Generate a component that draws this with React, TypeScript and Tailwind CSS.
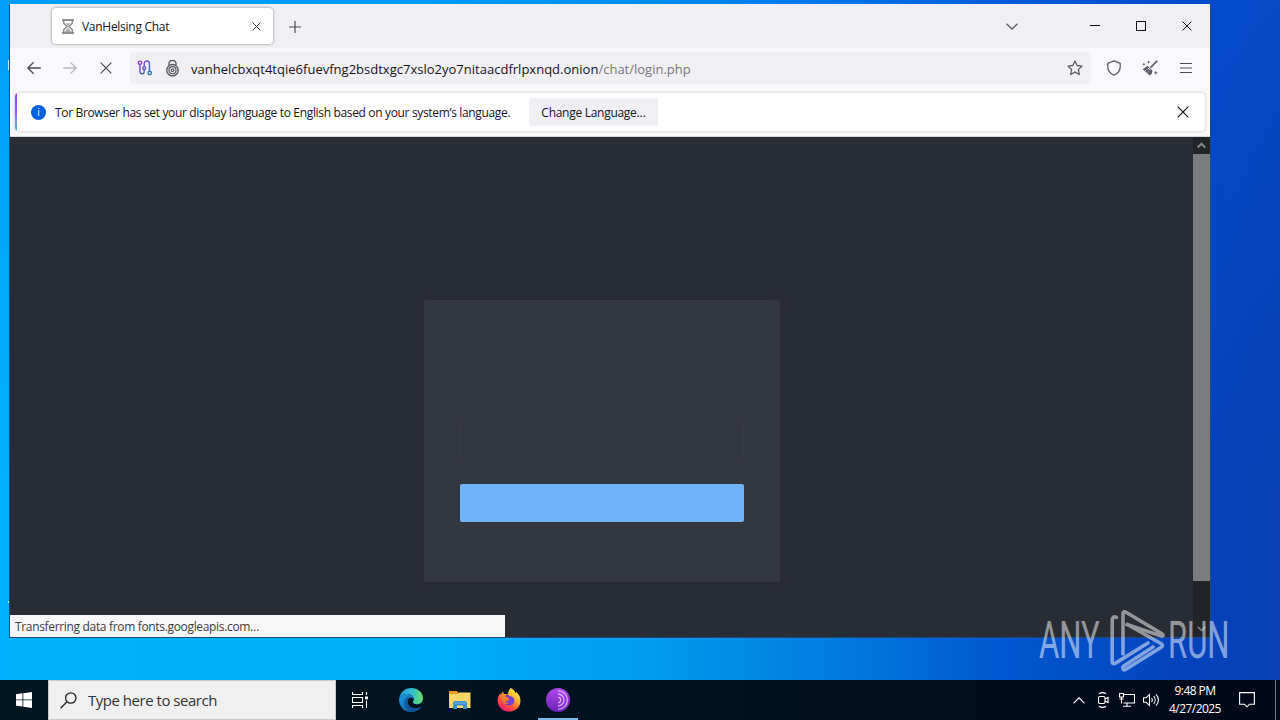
import React from "react";

type IconProps = { className?: string };

const Cross = ({ className = "" }: IconProps) => (
  <svg className={className} viewBox="0 0 12 12" fill="none" stroke="currentColor" strokeWidth="1.2">
    <path d="M.7.7 11.3 11.3M11.3.7.7 11.3" />
  </svg>
);

const Arrow = ({ className = "" }: IconProps) => (
  <svg className={className} viewBox="0 0 14 12" fill="none" stroke="currentColor" strokeWidth="1.3" strokeLinecap="round" strokeLinejoin="round">
    <path d="M13.3 6H.9M6.2.8.8 6l5.4 5.2" />
  </svg>
);

const Hourglass = () => (
  <svg className="h-[15px] w-3 text-[#8f8f8f]" viewBox="0 0 12 15" fill="none" stroke="currentColor">
    <path d="M0 1h12M0 14h12" strokeWidth="2" />
    <path d="M1.7 2v2.2L5 7.5l-3.3 3.3V13M10.3 2v2.2L7 7.5l3.3 3.3V13" strokeWidth="1.6" />
    <path d="m6 8.500 3.300 4.500H2.700zM3.500 4.200h5L6 7z" fill="currentColor" stroke="none" opacity=".75" />
  </svg>
);

const Circuit = () => (
  <svg className="h-4 w-4" viewBox="0 0 16 16" fill="none" stroke="url(#circuit)" strokeWidth="1.4">
    <defs>
      <linearGradient id="circuit" x1="0" y1="0" x2="16" y2="12" gradientUnits="userSpaceOnUse">
        <stop stopColor="#b52fce" />
        <stop offset=".5" stopColor="#6450c8" />
        <stop offset="1" stopColor="#1681bd" />
      </linearGradient>
    </defs>
    <circle cx="3" cy="2.800" r="1.700" />
    <path d="M3 4.500v7.200a2.100 2.100 0 0 0 4.200 0V9.800" />
    <circle cx="7.200" cy="8.100" r="1.500" />
    <path d="M7.200 6.500V3.600a2.600 2.600 0 0 1 5.200 0v7.700" />
    <circle cx="12.700" cy="13" r="1.700" />
  </svg>
);

const OnionLock = () => (
  <svg className="h-[17px] w-[13px] text-[#55555e]" viewBox="0 0 13 17" fill="none" stroke="currentColor">
    <path d="M3 5V3.800a3.500 3.500 0 0 1 7 0V5" strokeWidth="1.400" />
    <circle cx="6.500" cy="10.200" r="5.700" strokeWidth="1.300" />
    <circle cx="6.500" cy="10.200" r="3.500" strokeWidth="1.200" />
    <circle cx="6.500" cy="10.200" r="1.300" strokeWidth="1.200" />
  </svg>
);

const Star = () => (
  <svg className="h-4 w-4 text-[#5b5b66]" viewBox="0 0 16 16" fill="none" stroke="currentColor" strokeWidth="1.3" strokeLinejoin="round">
    <path d="m8 1 2.1 4.5 4.9.6-3.6 3.4.9 5L8 12.1l-4.3 2.4.9-5L1 6.1l4.9-.6z" />
  </svg>
);

const Shield = () => (
  <svg className="h-4 w-[14px] text-[#5b5b66]" viewBox="0 0 14 16" fill="none" stroke="currentColor" strokeWidth="1.3" strokeLinejoin="round">
    <path d="M7 .8 13.2 3.3v3.4c0 3.6-2.4 6.900-6.2 8.500C3.200 13.600.8 10.300.8 6.700V3.300z" />
  </svg>
);

const Broom = () => (
  <svg className="h-4 w-4 text-[#5b5b66]" viewBox="0 0 16 16" fill="none" stroke="currentColor" strokeWidth="1.5">
    <path d="M15.400.6 8.500 7.600" />
    <path d="m5.700 5.900 4.500 4.300c.4 2.200-.5 4-2.500 5.400L.5 9c1.300-.3 2.200-.8 2.700-1.600.6-.9 1.300-1.400 2.500-1.500z" fill="currentColor" stroke="none" />
    <path d="m5.800 7.900 2.400 2.400" stroke="#f9f9fb" strokeWidth="1" />
    <path d="m3.200 10.700 1.500-1M5.300 12.600l1-1.300" stroke="#f9f9fb" strokeWidth=".6" />
    <path d="m6.700.3.5 1.200 1.200.5-1.200.5-.5 1.200-.5-1.200L5 2l1.200-.5zM1.900 2.500l.5 1.200 1.200.5-1.200.5-.5 1.200-.5-1.200-1.200-.5 1.200-.5zM13.800 10.700l.6 1.500 1.500.6-1.500.6-.6 1.500-.6-1.500-1.500-.6 1.500-.6z" fill="currentColor" stroke="none" />
  </svg>
);

const Menu = () => (
  <svg className="h-3 w-3 text-[#4b4b55]" viewBox="0 0 12 12" stroke="currentColor" strokeWidth="1.200">
    <path d="M0 1.500h12M0 6h12M0 10.500h12" />
  </svg>
);

const Edge = () => (
  <svg className="h-6 w-6" viewBox="0 0 24 24">
    <defs>
      <linearGradient id="edgeTop" x1="2" y1="8" x2="24" y2="9" gradientUnits="userSpaceOnUse">
        <stop stopColor="#259fdf" />
        <stop offset=".5" stopColor="#32c1cd" />
        <stop offset="1" stopColor="#67df63" />
      </linearGradient>
      <linearGradient id="edgeLow" x1="3" y1="10" x2="18" y2="24" gradientUnits="userSpaceOnUse">
        <stop stopColor="#1b8fda" />
        <stop offset="1" stopColor="#0f54a0" />
      </linearGradient>
    </defs>
    <path d="M.2 10.700C1 4.500 6 0 12 0c7 0 12 4.700 12 10.200 0 3.700-2.700 6-6 6-2.800 0-4.200-1-4.200-1.900 0-.8 1-1.100 1-2.900C14.800 8.300 11.800 6 8.200 6 4.200 6 1.300 8 .2 10.700z" fill="url(#edgeTop)" />
    <path d="M.2 10.700C1.500 7.300 4.600 6 8.200 6c3.600 0 6.600 2.300 6.600 5.400-.6-1.200-1.700-1.700-2.800-1.700-2 0-3.500 1.600-3.500 4 0 4 3.600 6.400 7.700 6.400 2.300 0 4.300-.8 5.500-1.400.4-.2.7.2.5.5C20 22.300 16.300 24 12 24 4.500 24-.5 17.500.2 10.700z" fill="url(#edgeLow)" />
    <path d="M8 9.200c-2.400 2-3.600 5-2.700 8.200.9 3.400 3.400 5.800 7 6.600 4.200 0 7.700-2 9.900-4.800-1.300.7-3.500 1.300-6 .9-4-.5-7.700-2.800-7.700-6.400 0-2.400 1.500-4 3.500-4-1-.9-2.600-1.200-4-.5z" fill="#114a8b" opacity=".65" />
  </svg>
);

const Folder = () => (
  <svg className="h-[18px] w-[22px]" viewBox="0 0 22 18">
    <path d="M0 0h8l1.500 2H21v4H0z" fill="#e79a20" />
    <path d="M0 3h8.500L10 1.500h11.500V17H0z" fill="#fbd669" />
    <path d="M4 18v-6.500L5.500 10h11l1.500 1.500V18h-4v-3.500H8V18z" fill="#3c91cf" />
    <path d="M5 12h12" stroke="#63b2e6" strokeWidth="1" />
  </svg>
);

const Firefox = () => (
  <svg className="h-6 w-6" viewBox="0 0 24 24">
    <defs>
      <linearGradient id="fox" x1="19" y1="2" x2="5" y2="22" gradientUnits="userSpaceOnUse">
        <stop stopColor="#fff044" />
        <stop offset=".35" stopColor="#ffae2b" />
        <stop offset=".7" stopColor="#ff4b3e" />
        <stop offset="1" stopColor="#ef1c75" />
      </linearGradient>
    </defs>
    <path d="M13.800 0c3 1.400 4.100 3.300 4.600 5 .5-.1.700-.4.700-1 3 2.200 4.400 5.300 4.400 8.700C23.500 19 18.500 23.600 12 23.600S.6 18.700.6 12.500C.6 9.200 2 6.500 3.500 5.200c0 .7.100 1.200.4 1.700C4.500 5.100 5.500 4 6.300 3.200c-.1 1 .1 2 .6 2.900 1.400-.3 2.700-.1 3.900.5C11 4 12 1.700 13.800 0z" fill="url(#fox)" />
    <path d="M8 7.500c2.200-1 4-.5 4.600.6 3.600.3 5.200 2.600 4.700 5.300-.5 2.600-2.700 4-5.300 4-3 0-5-2.200-5-4.700 1.200.8 2.400.8 3.700 0l1.800-1.200c-.4-.9-1.500-1.200-3.200-1.400z" fill="#7542cf" />
    <path d="M3.900 8.200c2.700-.6 5.600.5 7.900 1.900-.4 1.500-2.800 1.300-3.200 2.700-.5 1.800 1.400 3 3.400 2.400-2.200 2-6.300.4-6.400-2.600C5.500 11 5 9.500 3.900 8.200z" fill="#ff7c2e" />
  </svg>
);

const Tor = () => (
  <svg className="h-6 w-6" viewBox="0 0 24 24" fill="none">
    <defs>
      <linearGradient id="tor" x1="12" y1="0" x2="12" y2="24" gradientUnits="userSpaceOnUse">
        <stop stopColor="#b348ee" />
        <stop offset="1" stopColor="#6c22b5" />
      </linearGradient>
    </defs>
    <circle cx="12" cy="12" r="12" fill="url(#tor)" />
    <path d="M12 2.600a9.400 9.400 0 0 1 0 18.800M12 6a6 6 0 0 1 0 12M12 9.300a2.700 2.700 0 0 1 0 5.400" stroke="#d9b0f5" strokeWidth="1.300" />
  </svg>
);

const TaskView = () => (
  <svg className="h-4 w-4" viewBox="0 0 16 16" fill="none" stroke="#fff" strokeWidth="1.100">
    <path d="M.5 0v2.500h10V0M.5 5.500h10v5H.5zM.5 16v-2.500h10V16M14.500 0v3M14.500 8.500V16" />
    <path d="M13 4.500h3v2.800h-3z" fill="#fff" stroke="none" />
  </svg>
);

const WatermarkLogo = () => (
  <svg className="h-[62px] w-[55px]" viewBox="0 0 55 62" fill="none" stroke="#fff" strokeWidth="3.600" strokeLinejoin="round" strokeLinecap="round">
    <path d="M13 44V3.500c0-2 1.500-2 3-1.200l36 21.500c1.500 1 1.500 2.500-.3 2.300L17 14.500" />
    <path d="M6.500 7.300C3.500 6 2.200 8 2.200 10v41.500c0 2.500 1.500 2.800 3.300 1.600L38 33" />
    <path d="m17.500 14.500 33.700 19.300c1.700 1.200 1.700 2.300 0 3.500L15.500 59.500c-2 1-3 0-2.500-3L43 37" />
  </svg>
);

export default function App() {
  return (
    <div className="relative flex h-[720px] w-[1280px] flex-col overflow-hidden bg-[linear-gradient(90deg,#00b2fb_0%,#00b0fa_33%,#009cef_50%,#007ce1_65%,#0058d0_78%,#0443be_92%,#0640b4_100%)] font-['Open_Sans','Noto_Sans',sans-serif]">
      <div className="flex h-[680px] flex-col bg-[linear-gradient(180deg,rgba(0,100,255,0.25)_0%,rgba(0,100,255,0)_75%)] pt-1 pl-[9px]">
        <main className="flex h-[634px] w-[1202px] flex-col border-x border-b border-[#174d7b] bg-[#f9f9fb]">
          <div className="flex h-11 shrink-0 items-start bg-[#f0f0f4] pt-[4px] pl-[42px]">
            <div className="flex h-9 w-[221px] items-center rounded-[4px] bg-white pr-[12px] pl-[10px] shadow-[0_0_3px_rgba(0,0,0,0.45)]">
              <Hourglass />
              <span className="ml-[8px] flex-1 pt-[2px] text-[12px] tracking-[-0.28px] whitespace-nowrap text-[#15141a]">VanHelsing Chat</span>
              <Cross className="h-[9px] w-[9px] text-[#25252d]" />
            </div>
            <svg className="mt-[13px] ml-[16px] h-3 w-3" viewBox="0 0 12 12" stroke="#4b4b55" strokeWidth="1.200"><path d="M6 0v12M0 6h12" /></svg>
            <svg className="mt-[15px] ml-[705px] h-[7px] w-3" viewBox="0 0 12 7" fill="none" stroke="#5b5b66" strokeWidth="1.300"><path d="m.5.7 5.500 5.300L11.500.7" /></svg>
            <svg className="mt-[17px] ml-[72px] h-[2px] w-[10px]" viewBox="0 0 10 2"><path d="M0 0h10v1H0z" fill="#111" /></svg>
            <div className="mt-[13px] ml-[36px] h-[10px] w-[10px] border border-[#111]" />
            <Cross className="mt-[13px] ml-[36px] h-[10px] w-[10px] text-[#111]" />
          </div>
          <div className="flex h-10 shrink-0 items-center pr-[17px] pl-[17px]">
            <Arrow className="h-3 w-[14px] text-[#4b4b55]" />
            <Arrow className="ml-[22px] h-3 w-[14px] rotate-180 text-[#b9b9c0]" />
            <Cross className="ml-[23px] h-3 w-3 text-[#4b4b55]" />
            <div className="ml-[18px] flex h-8 w-[961px] items-center rounded-[4px] bg-[#f0f0f4] pr-[8px] pl-[7px]">
              <Circuit />
              <span className="ml-[13px]"><OnionLock /></span>
              <span className="ml-[12px] flex-1 pt-[3px] text-[13px] whitespace-nowrap text-[#15141a]">
                <span className="tracking-[0.01px]">vanhelcbxqt4tqie6fuevfng2bsdtxgc7xslo2yo7nitaacdfrlpxnqd.onion</span><span className="text-[#77777f]">/chat/login.php</span>
              </span>
              <Star />
            </div>
            <span className="ml-[16px]"><Shield /></span>
            <span className="ml-[21px]"><Broom /></span>
            <span className="ml-[22px]"><Menu /></span>
          </div>
          <div className="flex h-[49px] shrink-0 border-b border-[#d5d5dc] px-[5px] pt-[5px]">
            <div className="flex h-[38px] w-full overflow-hidden rounded-[4px] bg-white shadow-[0_0_3px_rgba(58,57,68,0.3)]">
              <div className="w-[2px] bg-linear-to-b from-[#b833e1] via-[#9059ff] to-[#00c8d7]" />
              <div className="flex flex-1 items-center pr-[16px] pl-[14px]">
                <div className="flex h-[15px] w-[15px] items-center justify-center rounded-full bg-[#0060df] text-[10px] leading-none text-white">i</div>
                <span className="ml-[9px] w-[474px] pt-px text-[12px] tracking-[-0.34px] whitespace-nowrap text-[#15141a]">Tor Browser has set your display language to English based on your system’s language.</span>
                <button className="h-7 w-[129px] rounded-[3px] bg-[#f0f0f4] pt-[2px] text-[12px] tracking-[-0.28px] whitespace-nowrap text-[#15141a]">Change Language…</button>
                <span className="flex-1" />
                <Cross className="h-3 w-3 text-[#15141a]" />
              </div>
            </div>
          </div>
          <div className="flex min-h-0 flex-1 bg-[#282c34]">
            <div className="flex flex-1 flex-col">
              <div className="flex flex-1 items-start justify-center pt-[163px] pl-px">
                <section className="h-[282px] w-[356px] rounded-[3px] bg-[#333740] px-9 pt-[122px] shadow-[0_0_10px_rgba(40,43,58,0.4)]">
                  <div className="h-10 rounded-[3px] border-x border-[#373b43]" />
                  <div className="mt-[22px] h-[38px] rounded-[2px] bg-[#6fb4f9]" />
                </section>
              </div>
              <div className="h-[22px] w-[495px] bg-[#f8f8f8] pl-[5px] text-[12px] leading-[24px] tracking-[-0.33px] whitespace-nowrap text-[#3c3c40]">Transferring data from fonts.googleapis.com…</div>
            </div>
            <div className="flex w-[17px] flex-col items-center bg-[#212429]">
              <svg className="h-[17px] w-[9px] shrink-0" viewBox="0 0 9 17" fill="none" stroke="#858585" strokeWidth="2"><path d="m.7 10.500 3.800-3.800 3.800 3.800" /></svg>
              <div className="h-[427px] w-full shrink-0 bg-[#7b7c7f]" />
              <div className="flex-1" />
              <svg className="mb-[5px] h-[6px] w-[9px] shrink-0" viewBox="0 0 9 6" fill="none" stroke="#858585" strokeWidth="1.500"><path d="m.7.700 3.800 3.800L8.300.700" /></svg>
            </div>
          </div>
        </main>
      </div>

      <footer className="flex h-10 items-center bg-linear-to-r from-[#001721] via-[#00111f] to-[#000919] text-white">
        <div className="flex w-12 justify-center">
          <svg className="h-4 w-4" viewBox="0 0 16 16" fill="#fff"><path d="M0 2.200 6.500 1.300v6.200H0zM7.300 1.200 16 0v7.500H7.300zM0 8.300h6.500v6.300L0 13.700zM7.300 8.300H16V16l-8.700-1.300z" /></svg>
        </div>
        <div className="flex h-10 w-72 items-center border border-[#c6cacc] bg-[#f0f0f0] pl-[11px] text-[#333]">
          <svg className="h-[17px] w-[17px]" viewBox="0 0 17 17" fill="none" stroke="#222" strokeWidth="1.300"><circle cx="10.800" cy="6" r="5.200" /><path d="M7 9.700.6 16.200" /></svg>
          <span className="ml-[11px] pt-px text-[15px] tracking-[-0.48px] whitespace-nowrap">Type here to search</span>
        </div>
        <div className="flex w-12 justify-center"><TaskView /></div>
        <div className="ml-[3px] flex w-12 justify-center"><Edge /></div>
        <div className="flex w-[49px] justify-center"><Folder /></div>
        <div className="flex w-[49px] justify-center"><Firefox /></div>
        <div className="ml-[5px] flex h-10 w-10 items-center justify-center border-b-2 border-[#76b9ed] pt-[2px]"><Tor /></div>
        <div className="flex-1" />
        <svg className="h-[7px] w-3" viewBox="0 0 12 7" fill="none" stroke="#fff" strokeWidth="1.200"><path d="M.5 6.300 6 .8l5.500 5.500" /></svg>
        <svg className="ml-[12px] h-4 w-3" viewBox="0 0 12 16" fill="none" stroke="#fff" strokeWidth="1.100"><rect x="1.500" y="4.500" width="6.500" height="7" rx="1.200" /><path d="m8 7 3-1.500v5L8 9M2 1.800C4 .4 7 .4 9 1.800M2 14.200c2 1.400 5 1.400 7 0" /></svg>
        <svg className="ml-[10px] h-[14px] w-4" viewBox="0 0 16 14" fill="none" stroke="#fff" strokeWidth="1.100"><path d="M5 1.500h10.500v8.500H4.500M8 10v3M4 13.300h8M.5.500h4v3.500h-4zM2.500 4v6.500M.5 6h4" /></svg>
        <svg className="ml-[8px] h-[14px] w-4" viewBox="0 0 16 14" fill="none" stroke="#fff" strokeWidth="1.100"><path d="M.5 4.800h2.500L6.500 1.500v11L3 9.200H.5zM8.500 5c1 1.200 1 2.800 0 4M10.700 3.200c2 2.200 2 5.400 0 7.600M13 1.300c3.200 3.300 3.200 8.100 0 11.400" /></svg>
        <div className="ml-[9px] w-[54px] text-center text-[12px] leading-[18px] tracking-[-0.55px] whitespace-nowrap">
          <div>9:48 PM</div>
          <div>4/27/2025</div>
        </div>
        <svg className="ml-[17px] h-4 w-4" viewBox="0 0 16 16" fill="none" stroke="#fff" strokeWidth="1.100"><path d="M.6.6h14.800v11.600H10.500L8 14.800l-2.500-2.600H.6z" /></svg>
        <div className="ml-[20px] h-10 w-[5px] border-l border-[#737a82]" />
      </footer>

      <div className="absolute top-[60px] left-[8px] h-[10px] w-px bg-white/80" />
      <div className="absolute top-[601px] left-[8px] h-[2px] w-px bg-white/80" />
      <div className="absolute top-[610px] left-[1039px] flex h-[62px] items-center font-['Roboto',sans-serif] text-[51px] leading-[62px] font-normal text-white opacity-50">
        <div className="w-[71px]"><span className="inline-block origin-left scale-x-[0.610]">ANY</span></div>
        <WatermarkLogo />
        <div className="ml-[3px] w-[62px]"><span className="inline-block origin-left scale-x-[0.610]">RUN</span></div>
      </div>
    </div>
  );
}
